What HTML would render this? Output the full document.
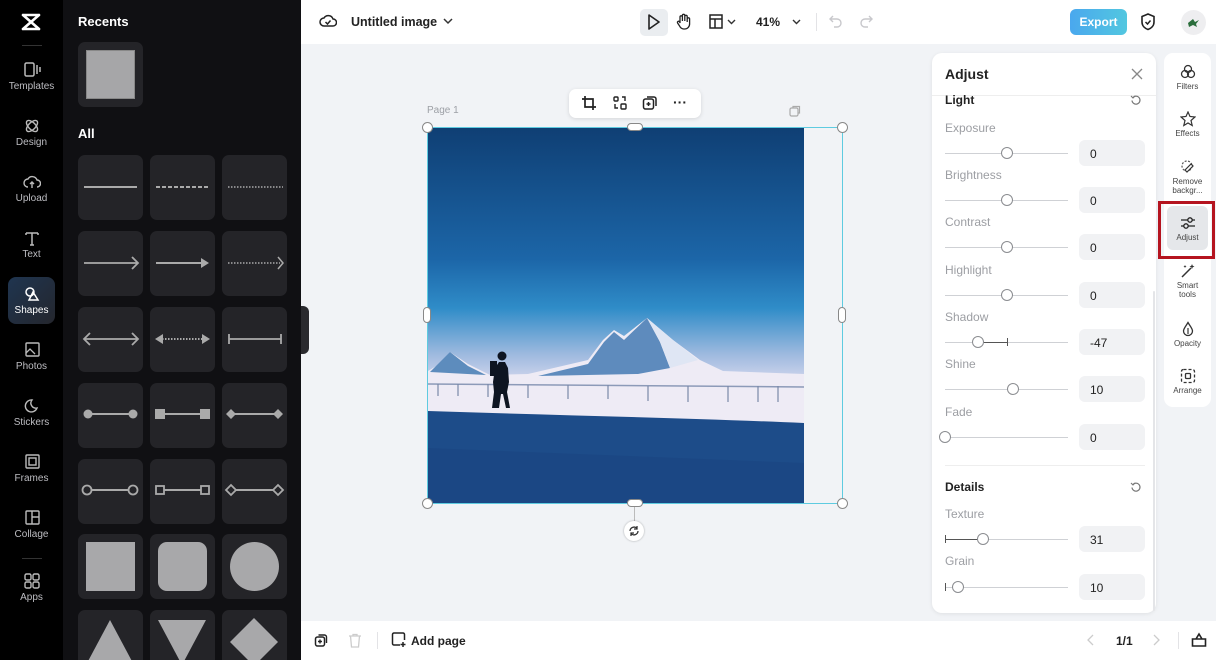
<!DOCTYPE html>
<html><head><meta charset="utf-8"><style>
*{box-sizing:border-box;margin:0;padding:0}
html,body{width:1216px;height:660px;overflow:hidden}
body{position:relative;font-family:"Liberation Sans",sans-serif;background:#f1f3f6}
.abs{position:absolute}
#nav{left:0;top:0;width:63px;height:660px;background:#000}
.ni{position:absolute;left:0;width:63px;text-align:center;color:#bdbdc2;font-size:10px}
.ni svg{display:block;margin:0 auto 3px}
#side{left:63px;top:0;width:238px;height:660px;background:#101013;overflow:hidden}
.t{position:absolute;width:65px;height:65px;background:#242428;border-radius:7px}
.t svg{position:absolute;left:0;top:0}
#top{left:301px;top:0;width:915px;height:44px;background:#fff}
#bot{left:301px;top:621px;width:915px;height:39px;background:#fff}
#adj{left:932px;top:53px;width:224px;height:560px;background:#fff;border-radius:10px;box-shadow:0 1px 4px rgba(0,0,0,.08)}
.lbl{position:absolute;left:13px;font-size:12px;color:#9c9ea3}
.trk{position:absolute;left:13px;width:123px;height:1px;background:#cfd1d5}
.knob{position:absolute;width:12px;height:12px;border:1px solid #8a8c90;border-radius:50%;background:#fff}
.val{position:absolute;left:147px;width:66px;height:26px;background:#f1f2f4;border-radius:6px;font-size:12px;color:#222;padding:7px 0 0 11px}
#rs{left:1164px;top:53px;width:47px;height:354px;background:#fff;border-radius:9px}
.ri{position:absolute;left:0;width:47px;text-align:center;font-size:8px;color:#444;line-height:9px}
.ri svg{display:block;margin:0 auto 2px}
</style></head><body>
<div id="nav" class="abs">
 <svg class="abs" style="left:20px;top:12px" width="22" height="20" viewBox="0 0 22 20"><path d="M3 3 L19 3 M3 3 L19 17 M19 3 L3 17 M3 17 L19 17" stroke="#fff" stroke-width="2.6" fill="none" stroke-linecap="round"/></svg>
 <div class="abs" style="left:22px;top:45px;width:20px;height:1px;background:#333"></div>
 <div class="ni" style="top:62px"><svg width="18" height="16"><rect x="2" y="1" width="9" height="13" rx="1.5" stroke="#bbb" stroke-width="1.5" fill="none"/><path d="M14 3v9M17 5v5" stroke="#bbb" stroke-width="1.5"/></svg>Templates</div>
 <div class="ni" style="top:118px"><svg width="18" height="16"><ellipse cx="9" cy="8" rx="7" ry="3.5" transform="rotate(45 9 8)" stroke="#bbb" stroke-width="1.4" fill="none"/><ellipse cx="9" cy="8" rx="7" ry="3.5" transform="rotate(-45 9 8)" stroke="#bbb" stroke-width="1.4" fill="none"/></svg>Design</div>
 <div class="ni" style="top:174px"><svg width="18" height="16"><path d="M5 13a4 4 0 0 1 0-8 5 5 0 0 1 9 1 3.5 3.5 0 0 1 0 7M9 14V8M7 10l2-2 2 2" stroke="#bbb" stroke-width="1.4" fill="none"/></svg>Upload</div>
 <div class="ni" style="top:230px"><svg width="18" height="16"><path d="M3 3h12M9 3v12M3 3v2M15 3v2M7 15h4" stroke="#bbb" stroke-width="1.5" fill="none"/></svg>Text</div>
 <div class="abs" style="left:8px;top:277px;width:47px;height:47px;border-radius:8px;background:linear-gradient(135deg,#1f3550,#24262d)"></div>
 <div class="ni" style="top:286px;color:#fff"><svg width="18" height="16"><circle cx="7" cy="6" r="4" stroke="#fff" stroke-width="1.5" fill="none"/><path d="M10 6l5 8H6z" stroke="#fff" stroke-width="1.5" fill="none"/></svg>Shapes</div>
 <div class="ni" style="top:342px"><svg width="18" height="16"><rect x="3" y="1" width="13" height="13" rx="1" stroke="#bbb" stroke-width="1.4" fill="none"/><path d="M3 11l4-4 5 5" stroke="#bbb" stroke-width="1.3" fill="none"/></svg>Photos</div>
 <div class="ni" style="top:398px"><svg width="18" height="16"><path d="M14 10a6 6 0 1 1-5-8 5 5 0 0 0 5 8z" stroke="#bbb" stroke-width="1.4" fill="none"/></svg>Stickers</div>
 <div class="ni" style="top:454px"><svg width="18" height="16"><rect x="3" y="1" width="13" height="13" rx="1" stroke="#bbb" stroke-width="1.4" fill="none"/><rect x="6" y="4" width="7" height="7" stroke="#bbb" stroke-width="1.4" fill="none"/></svg>Frames</div>
 <div class="ni" style="top:510px"><svg width="18" height="16"><rect x="3" y="1" width="13" height="13" rx="1" stroke="#bbb" stroke-width="1.4" fill="none"/><path d="M9 1v13M9 7h7" stroke="#bbb" stroke-width="1.4"/></svg>Collage</div>
 <div class="abs" style="left:22px;top:558px;width:20px;height:1px;background:#333"></div>
 <div class="ni" style="top:573px"><svg width="18" height="16"><rect x="2" y="1" width="6" height="6" rx="1.5" stroke="#bbb" stroke-width="1.4" fill="none"/><rect x="10" y="1" width="6" height="6" rx="1.5" stroke="#bbb" stroke-width="1.4" fill="none"/><rect x="2" y="9" width="6" height="6" rx="1.5" stroke="#bbb" stroke-width="1.4" fill="none"/><rect x="10" y="9" width="6" height="6" rx="1.5" stroke="#bbb" stroke-width="1.4" fill="none"/></svg>Apps</div>
</div>
<div id="side" class="abs">
 <div class="abs" style="left:15px;top:14px;color:#fff;font-weight:bold;font-size:13px">Recents</div>
 <div class="t" style="left:15px;top:42px"><div class="abs" style="left:8px;top:8px;width:49px;height:49px;background:#a6a6a8;border:1px solid #888"></div></div>
 <div class="abs" style="left:15px;top:126px;color:#fff;font-weight:bold;font-size:13px">All</div>
 <div class="t" style="left:15px;top:155px"><svg width="65" height="65"><path d="M6 32H59" stroke="#aaa" stroke-width="2"/></svg></div>
 <div class="t" style="left:87px;top:155px"><svg width="65" height="65"><path d="M6 32H59" stroke="#aaa" stroke-width="2" stroke-dasharray="4 2"/></svg></div>
 <div class="t" style="left:159px;top:155px"><svg width="65" height="65"><path d="M6 32H61" stroke="#aaa" stroke-width="1.5" stroke-dasharray="1.5 1.5"/></svg></div>
 <div class="t" style="left:15px;top:231px"><svg width="65" height="65"><path d="M6 32H60M54 26l6 6-6 6" stroke="#aaa" stroke-width="1.8" fill="none"/></svg></div>
 <div class="t" style="left:87px;top:231px"><svg width="65" height="65"><path d="M6 32H52" stroke="#aaa" stroke-width="2"/><path d="M51 27l8 5-8 5z" fill="#aaa"/></svg></div>
 <div class="t" style="left:159px;top:231px"><svg width="65" height="65"><path d="M6 32H58" stroke="#aaa" stroke-width="1.5" stroke-dasharray="1.5 1.5"/><path d="M56 26l5 6-5 6" stroke="#aaa" stroke-width="1.5" fill="none"/></svg></div>
 <div class="t" style="left:15px;top:307px"><svg width="65" height="65"><path d="M6 32H60M12 26l-6 6 6 6M54 26l6 6-6 6" stroke="#aaa" stroke-width="1.8" fill="none"/></svg></div>
 <div class="t" style="left:87px;top:307px"><svg width="65" height="65"><path d="M12 32H53" stroke="#aaa" stroke-width="2" stroke-dasharray="1.5 1.5"/><path d="M13 27l-8 5 8 5zM52 27l8 5-8 5z" fill="#aaa"/></svg></div>
 <div class="t" style="left:159px;top:307px"><svg width="65" height="65"><path d="M7 32H59M7 27v10M59 27v10" stroke="#aaa" stroke-width="1.8"/></svg></div>
 <div class="t" style="left:15px;top:383px"><svg width="65" height="65"><path d="M10 31H55" stroke="#aaa" stroke-width="2"/><circle cx="10" cy="31" r="4.5" fill="#aaa"/><circle cx="55" cy="31" r="4.5" fill="#aaa"/></svg></div>
 <div class="t" style="left:87px;top:383px"><svg width="65" height="65"><path d="M10 31H55" stroke="#aaa" stroke-width="2"/><rect x="5" y="26" width="10" height="10" fill="#aaa"/><rect x="50" y="26" width="10" height="10" fill="#aaa"/></svg></div>
 <div class="t" style="left:159px;top:383px"><svg width="65" height="65"><path d="M10 31H55" stroke="#aaa" stroke-width="2"/><path d="M4 31l5-5 5 5-5 5zM51 31l5-5 5 5-5 5z" fill="#aaa"/></svg></div>
 <div class="t" style="left:15px;top:459px"><svg width="65" height="65"><path d="M13 31H51" stroke="#aaa" stroke-width="2"/><circle cx="9" cy="31" r="4.5" fill="none" stroke="#aaa" stroke-width="1.8"/><circle cx="55" cy="31" r="4.5" fill="none" stroke="#aaa" stroke-width="1.8"/></svg></div>
 <div class="t" style="left:87px;top:459px"><svg width="65" height="65"><path d="M14 31H51" stroke="#aaa" stroke-width="2"/><rect x="6" y="27" width="8" height="8" fill="none" stroke="#aaa" stroke-width="1.8"/><rect x="51" y="27" width="8" height="8" fill="none" stroke="#aaa" stroke-width="1.8"/></svg></div>
 <div class="t" style="left:159px;top:459px"><svg width="65" height="65"><path d="M13 31H51" stroke="#aaa" stroke-width="2"/><path d="M4 31l5-5 5 5-5 5zM51 31l5-5 5 5-5 5z" fill="none" stroke="#aaa" stroke-width="1.8"/></svg></div>
 <div class="t" style="left:15px;top:534px"><div class="abs" style="left:8px;top:8px;width:49px;height:49px;background:#a8a8aa"></div></div>
 <div class="t" style="left:87px;top:534px"><div class="abs" style="left:8px;top:8px;width:49px;height:49px;background:#a8a8aa;border-radius:9px"></div></div>
 <div class="t" style="left:159px;top:534px"><div class="abs" style="left:8px;top:8px;width:49px;height:49px;background:#a8a8aa;border-radius:50%"></div></div>
 <div class="t" style="left:15px;top:610px"><svg width="65" height="65"><path d="M32 10L56 55H8z" fill="#a8a8aa"/></svg></div>
 <div class="t" style="left:87px;top:610px"><svg width="65" height="65"><path d="M8 10H56L32 55z" fill="#a8a8aa"/></svg></div>
 <div class="t" style="left:159px;top:610px"><svg width="65" height="65"><path d="M32 8L56 32 32 56 8 32z" fill="#a8a8aa"/></svg></div>
</div>
<div class="abs" style="left:301px;top:306px;width:8px;height:48px;background:#2a2a2e;border-radius:0 6px 6px 0"></div>
<div id="top" class="abs">
 <svg class="abs" style="left:18px;top:13px" width="18" height="16"><path d="M5 13a4 4 0 0 1 0-8 5 5 0 0 1 9 1 3.5 3.5 0 0 1 0 7z" stroke="#222" stroke-width="1.5" fill="none"/><path d="M6.5 9l2 2 3-3.5" stroke="#222" stroke-width="1.5" fill="none"/></svg>
 <div class="abs" style="left:50px;top:15px;font-size:12.5px;font-weight:bold;color:#222">Untitled image</div>
 <svg class="abs" style="left:142px;top:17px" width="10" height="8"><path d="M1 2l4 4 4-4" stroke="#333" stroke-width="1.5" fill="none"/></svg>
 <div class="abs" style="left:339px;top:9px;width:28px;height:27px;background:#eaedf0;border-radius:5px"></div>
 <svg class="abs" style="left:346px;top:14px" width="14" height="16"><path d="M2 1l10 7-10 7z" stroke="#222" stroke-width="1.6" fill="none" stroke-linejoin="round"/></svg>
 <svg class="abs" style="left:375px;top:13px" width="16" height="18"><path d="M4 10V4a1.2 1.2 0 0 1 2.4 0v4V2.5a1.2 1.2 0 0 1 2.4 0V8V3.5a1.2 1.2 0 0 1 2.4 0V9V6a1.2 1.2 0 0 1 2.4 0v5a5 5 0 0 1-5 5h-1a5 5 0 0 1-4-3l-2-3a1.2 1.2 0 0 1 2-1.3z" stroke="#222" stroke-width="1.3" fill="none"/></svg>
 <svg class="abs" style="left:408px;top:14px" width="14" height="15"><rect x="1" y="1" width="12" height="13" stroke="#222" stroke-width="1.5" fill="none"/><path d="M1 5h12M6 5v9" stroke="#222" stroke-width="1.5"/></svg>
 <svg class="abs" style="left:426px;top:18px" width="10" height="8"><path d="M1 2l3.5 3.5L8 2" stroke="#333" stroke-width="1.4" fill="none"/></svg>
 <div class="abs" style="left:455px;top:15px;font-size:12px;font-weight:bold;color:#222">41%</div>
 <svg class="abs" style="left:491px;top:18px" width="10" height="8"><path d="M1 2l3.5 3.5L8 2" stroke="#333" stroke-width="1.4" fill="none"/></svg>
 <div class="abs" style="left:515px;top:13px;width:1px;height:18px;background:#e3e3e6"></div>
 <svg class="abs" style="left:528px;top:14px" width="14" height="15"><path d="M4 2L1 5l3 3M1 5h7a4 4 0 0 1 0 8H5" stroke="#c8c8cc" stroke-width="1.4" fill="none"/></svg>
 <svg class="abs" style="left:558px;top:14px" width="14" height="15"><path d="M10 2l3 3-3 3M13 5H6a4 4 0 0 0 0 8h3" stroke="#c8c8cc" stroke-width="1.4" fill="none"/></svg>
 <div class="abs" style="left:769px;top:9px;width:57px;height:26px;border-radius:6px;background:linear-gradient(90deg,#4aa8ee,#52c7e0);color:#fff;font-size:12px;font-weight:bold;text-align:center;line-height:26px">Export</div>
 <svg class="abs" style="left:839px;top:13px" width="16" height="18"><path d="M8 1l6 2.5V9c0 4-3 6.5-6 7.5C5 15.5 2 13 2 9V3.5z" stroke="#222" stroke-width="1.6" fill="none"/><path d="M5.5 9l2 2 3-3.5" stroke="#222" stroke-width="1.5" fill="none"/></svg>
 <div class="abs" style="left:880px;top:10px;width:25px;height:25px;border-radius:50%;background:#eeeef0"></div>
 <svg class="abs" style="left:886px;top:17px" width="13" height="11"><path d="M1 6l5-4 2 3 4-2-3 4 1 3-4-2-4 2z" fill="#2b6e3c"/></svg>
</div>
<div class="abs" style="left:427px;top:105px;font-size:10px;color:#9da0a6">Page 1</div>
<svg class="abs" style="left:789px;top:105px" width="12" height="12"><rect x="1" y="3" width="8" height="8" rx="1.5" stroke="#aaa" fill="none" stroke-width="1.2"/><path d="M4 3V1.5h6.5V8H9" stroke="#aaa" fill="none" stroke-width="1.2"/></svg>
<div class="abs" style="left:569px;top:89px;width:132px;height:29px;background:#fff;border-radius:7px;box-shadow:0 1px 4px rgba(0,0,0,.12)"></div>
<svg class="abs" style="left:581px;top:95px" width="16" height="16"><path d="M4 1v11h11M1 4h11v11" stroke="#222" stroke-width="1.7" fill="none"/></svg>
<svg class="abs" style="left:612px;top:95px" width="16" height="16"><rect x="2" y="2" width="4" height="4" rx="1" stroke="#222" stroke-width="1.4" fill="none"/><rect x="9" y="9" width="5" height="5" rx="1" stroke="#222" stroke-width="1.4" fill="none"/><path d="M10 2h3v4M3 9v4h3" stroke="#222" stroke-width="1.4" fill="none"/></svg>
<svg class="abs" style="left:642px;top:95px" width="16" height="16"><rect x="1.5" y="4" width="10" height="10" rx="2" stroke="#222" stroke-width="1.5" fill="none"/><path d="M5 2h7a2 2 0 0 1 2 2v7M6.5 7v4M4.5 9h4" stroke="#222" stroke-width="1.5" fill="none"/></svg>
<div class="abs" style="left:673px;top:94px;font-size:14px;font-weight:bold;color:#222">···</div>
<!-- image -->
<div class="abs" style="left:428px;top:128px;width:376px;height:375px;overflow:hidden;background:linear-gradient(180deg,#0f3f74 0%,#1c66a8 35%,#2f8cc8 48%,#9bb8de 60%,#d5d8ee 68%,#e8e6f2 75%)">
 <svg width="376" height="375" style="position:absolute;left:0;top:0">
  <path d="M0 243 L15 234 L22 224 L40 236 L62 247 L100 246 L160 232 L175 212 L186 202 L196 208 L219 190 L245 212 L272 232 L295 243 L376 246 L376 300 L0 283z" fill="#eeebf5"/>
  <path d="M2 244 L22 224 L40 238 L58 247z" fill="#5d8cbd"/>
  <path d="M110 248 L160 236 L176 214 L186 204 L196 212 L219 190 L232 214 L242 240 L210 246z" fill="#5e8bbd"/>
  <path d="M219 190 L245 212 L270 232 L242 240 L232 214z" fill="#dfe6f4"/>
  <path d="M0 256 L376 259" stroke="#8c9ab8" stroke-width="1.5"/>
  <path d="M10 256v12M30 256v12M60 256v13M100 257v13M140 257v14M180 257v14M220 258v15M260 258v16M300 258v16M330 258v16M350 258v16" stroke="#7a88a8" stroke-width="1.2"/>
  <path d="M0 283 C120 287 260 290 376 295 L376 375 L0 375z" fill="#1d4c89"/>
  <path d="M0 375 L0 320 L376 335 L376 375z" fill="#1a4580" opacity=".6"/>
  <path d="M64 280 l2-16 l-1-10 l2-14 l4-6 h6 l3 6 l1 14 l-2 10 l3 16 h-4 l-3-14 l-2 0 l-2 14z" fill="#0e1522"/>
  <circle cx="74" cy="228" r="4.5" fill="#0e1522"/>
  <path d="M62 233h7v15h-7z" fill="#0e1522"/>
 </svg>
</div>
<div class="abs" style="left:427px;top:127px;width:416px;height:377px;border:1.5px solid #5ecbe0"></div>
<div class="abs" style="left:422px;top:122px;width:11px;height:11px;border-radius:50%;background:#fff;border:1px solid #888"></div>
<div class="abs" style="left:837px;top:122px;width:11px;height:11px;border-radius:50%;background:#fff;border:1px solid #888"></div>
<div class="abs" style="left:422px;top:498px;width:11px;height:11px;border-radius:50%;background:#fff;border:1px solid #888"></div>
<div class="abs" style="left:837px;top:498px;width:11px;height:11px;border-radius:50%;background:#fff;border:1px solid #888"></div>
<div class="abs" style="left:627px;top:123px;width:16px;height:8px;border-radius:4px;background:#fff;border:1px solid #888"></div>
<div class="abs" style="left:627px;top:499px;width:16px;height:8px;border-radius:4px;background:#fff;border:1px solid #888"></div>
<div class="abs" style="left:423px;top:307px;width:8px;height:16px;border-radius:4px;background:#fff;border:1px solid #888"></div>
<div class="abs" style="left:838px;top:307px;width:8px;height:16px;border-radius:4px;background:#fff;border:1px solid #888"></div>
<div class="abs" style="left:634px;top:507px;width:1px;height:14px;background:#bbb"></div>
<div class="abs" style="left:624px;top:521px;width:20px;height:20px;border-radius:50%;background:#fff;box-shadow:0 0 2px rgba(0,0,0,.3)"></div>
<svg class="abs" style="left:628px;top:525px" width="12" height="12"><path d="M2 6a4 4 0 0 1 7-2.5M10 6a4 4 0 0 1-7 2.5M9 1v3H6M3 11V8h3" stroke="#333" stroke-width="1.3" fill="none"/></svg>
<!-- adjust -->
<div id="adj" class="abs">
 <div class="abs" style="left:13px;top:13px;font-size:14px;font-weight:bold;color:#222">Adjust</div>
 <svg class="abs" style="left:199px;top:15px" width="12" height="12"><path d="M1 1l10 10M11 1L1 11" stroke="#888" stroke-width="1.3"/></svg>
 <div class="abs" style="left:0;top:42px;width:224px;height:1px;background:#eee"></div>
 <div class="abs" style="left:13px;top:40px;font-size:12px;font-weight:bold;color:#222">Light</div>
 <svg class="abs" style="left:198px;top:41px" width="12" height="12"><path d="M3 3.5a4 4 0 1 1-1 3" stroke="#777" stroke-width="1.2" fill="none"/><path d="M1 2l2 2 2-2" stroke="#777" stroke-width="1.1" fill="none"/></svg>
 <div class="lbl" style="top:68px">Exposure</div><div class="trk" style="top:100px"></div><div class="knob" style="left:69px;top:94px"></div><div class="val" style="top:87px">0</div>
 <div class="lbl" style="top:115px">Brightness</div><div class="trk" style="top:147px"></div><div class="knob" style="left:69px;top:141px"></div><div class="val" style="top:134px">0</div>
 <div class="lbl" style="top:162px">Contrast</div><div class="trk" style="top:194px"></div><div class="knob" style="left:69px;top:188px"></div><div class="val" style="top:181px">0</div>
 <div class="lbl" style="top:210px">Highlight</div><div class="trk" style="top:242px"></div><div class="knob" style="left:69px;top:236px"></div><div class="val" style="top:229px">0</div>
 <div class="lbl" style="top:257px">Shadow</div><div class="trk" style="top:289px"></div><div class="abs" style="left:46px;top:289px;width:29px;height:1px;background:#555"></div><div class="abs" style="left:75px;top:285px;width:1px;height:8px;background:#555"></div><div class="knob" style="left:40px;top:283px"></div><div class="val" style="top:276px">-47</div>
 <div class="lbl" style="top:304px">Shine</div><div class="trk" style="top:336px"></div><div class="knob" style="left:75px;top:330px"></div><div class="val" style="top:323px">10</div>
 <div class="lbl" style="top:352px">Fade</div><div class="trk" style="top:384px"></div><div class="knob" style="left:7px;top:378px"></div><div class="val" style="top:371px">0</div>
 <div class="abs" style="left:13px;top:412px;width:200px;height:1px;background:#eee"></div>
 <div class="abs" style="left:13px;top:427px;font-size:12px;font-weight:bold;color:#222">Details</div>
 <svg class="abs" style="left:198px;top:428px" width="12" height="12"><path d="M3 3.5a4 4 0 1 1-1 3" stroke="#777" stroke-width="1.2" fill="none"/><path d="M1 2l2 2 2-2" stroke="#777" stroke-width="1.1" fill="none"/></svg>
 <div class="lbl" style="top:454px">Texture</div><div class="trk" style="top:486px"></div><div class="abs" style="left:13px;top:486px;width:33px;height:1px;background:#555"></div><div class="abs" style="left:13px;top:482px;width:1px;height:8px;background:#555"></div><div class="knob" style="left:45px;top:480px"></div><div class="val" style="top:473px">31</div>
 <div class="lbl" style="top:501px">Grain</div><div class="trk" style="top:534px"></div><div class="abs" style="left:13px;top:530px;width:1px;height:8px;background:#555"></div><div class="knob" style="left:20px;top:528px"></div><div class="val" style="top:521px">10</div>
 <div class="abs" style="left:221px;top:238px;width:2px;height:320px;background:#e4e5e8;border-radius:1px"></div>
</div>
<div id="rs" class="abs">
 <div class="ri" style="top:11px"><svg width="16" height="16"><circle cx="8" cy="5" r="3.5" stroke="#333" stroke-width="1.3" fill="none"/><circle cx="5" cy="10" r="3.5" stroke="#333" stroke-width="1.3" fill="none"/><circle cx="11" cy="10" r="3.5" stroke="#333" stroke-width="1.3" fill="none"/></svg>Filters</div>
 <div class="ri" style="top:58px"><svg width="16" height="16"><path d="M8 1l2 4.5 5 .5-4 3.5 1.2 5L8 12l-4.2 2.5L5 9.5 1 6l5-.5z" stroke="#333" stroke-width="1.2" fill="none"/></svg>Effects</div>
 <div class="ri" style="top:106px"><svg width="16" height="16"><circle cx="7" cy="7" r="5" stroke="#555" stroke-width="1.2" stroke-dasharray="2 1.5" fill="none"/><path d="M5 11l6-6 2 2-6 6z" stroke="#333" stroke-width="1.2" fill="#fff"/></svg>Remove<br>backgr...</div>
 <div class="abs" style="left:3px;top:153px;width:41px;height:44px;background:#e5e7ea;border-radius:6px"></div>
 <div class="ri" style="top:162px"><svg width="16" height="16"><path d="M1 5h14M1 11h14" stroke="#222" stroke-width="1.3"/><circle cx="10" cy="5" r="2.2" fill="#e5e7ea" stroke="#222" stroke-width="1.3"/><circle cx="6" cy="11" r="2.2" fill="#e5e7ea" stroke="#222" stroke-width="1.3"/></svg>Adjust</div>
 <div class="ri" style="top:210px"><svg width="16" height="16"><path d="M2 14l9-9" stroke="#333" stroke-width="1.5"/><path d="M12 1l.7 1.8 1.8.7-1.8.7L12 6l-.7-1.8-1.8-.7 1.8-.7zM5 2l.5 1 1 .5-1 .5L5 5l-.5-1-1-.5 1-.5z" fill="#333"/></svg>Smart<br>tools</div>
 <div class="ri" style="top:268px"><svg width="16" height="16"><path d="M8 1.5C6 5 3.5 7.5 3.5 10a4.5 4.5 0 0 0 9 0C12.5 7.5 10 5 8 1.5z" stroke="#333" stroke-width="1.3" fill="none"/><path d="M8 7v6" stroke="#333" stroke-width="1.2"/></svg>Opacity</div>
 <div class="ri" style="top:315px"><svg width="16" height="16"><rect x="1.5" y="1.5" width="13" height="13" rx="2" stroke="#333" stroke-width="1.3" stroke-dasharray="3 2" fill="none"/><rect x="5.5" y="5.5" width="5" height="5" rx="1" stroke="#333" stroke-width="1.3" fill="none"/></svg>Arrange</div>
</div>
<div class="abs" style="left:1158px;top:201px;width:57px;height:58px;border:3px solid #b5141f"></div>
<div id="bot" class="abs">
 <svg class="abs" style="left:13px;top:12px" width="15" height="15"><rect x="1.5" y="4" width="9" height="9" rx="2" stroke="#222" stroke-width="1.5" fill="none"/><path d="M4.5 2h6a2 2 0 0 1 2 2v6M6 6.5v4M4 8.5h4" stroke="#222" stroke-width="1.4" fill="none"/></svg>
 <svg class="abs" style="left:47px;top:12px" width="14" height="15"><path d="M1 3h12M5 3V1.5h4V3M2.5 3l1 11h7l1-11" stroke="#ccc" stroke-width="1.3" fill="none"/></svg>
 <div class="abs" style="left:76px;top:11px;width:1px;height:17px;background:#e3e3e6"></div>
 <svg class="abs" style="left:90px;top:11px" width="16" height="16"><path d="M9 13H3a1.5 1.5 0 0 1-1.5-1.5v-9A1.5 1.5 0 0 1 3 1h9a1.5 1.5 0 0 1 1.5 1.5V8M12 10v5M9.5 12.5h5" stroke="#222" stroke-width="1.5" fill="none"/></svg>
 <div class="abs" style="left:110px;top:13px;font-size:12px;font-weight:bold;color:#222">Add page</div>
 <svg class="abs" style="left:786px;top:13px" width="8" height="12"><path d="M6 1L1 6l5 5" stroke="#ccc" stroke-width="1.3" fill="none"/></svg>
 <div class="abs" style="left:815px;top:13px;font-size:12px;font-weight:bold;color:#222">1/1</div>
 <svg class="abs" style="left:851px;top:13px" width="8" height="12"><path d="M2 1l5 5-5 5" stroke="#ccc" stroke-width="1.3" fill="none"/></svg>
 <div class="abs" style="left:877px;top:11px;width:1px;height:17px;background:#e3e3e6"></div>
 <svg class="abs" style="left:890px;top:11px" width="16" height="16"><path d="M1.5 7h13v7h-13zM5 7l3-5 3 5" stroke="#222" stroke-width="1.6" fill="none"/></svg>
</div>
</body></html>
